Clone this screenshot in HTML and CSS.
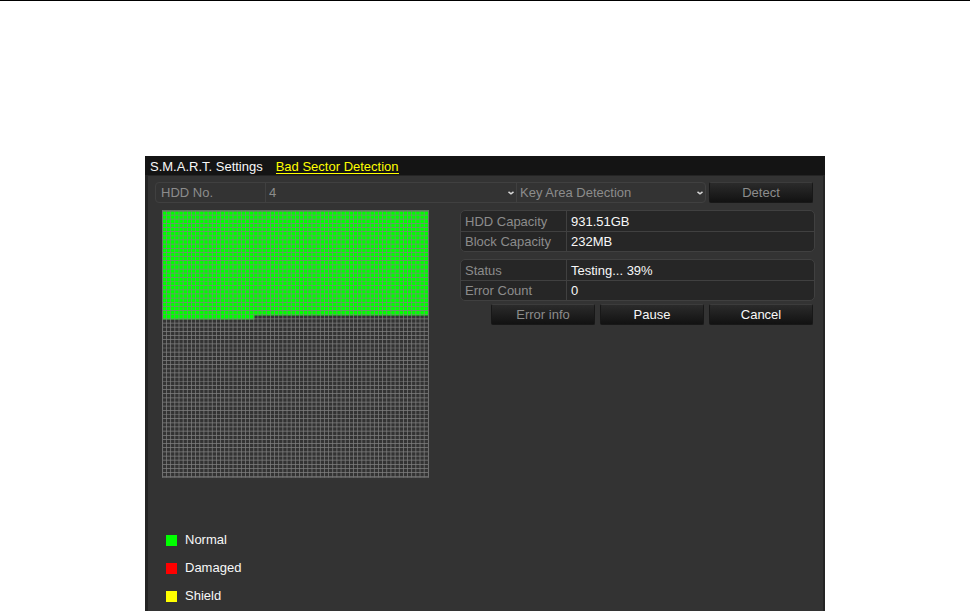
FILE: index.html
```
<!DOCTYPE html>
<html lang="en">
<head>
    <meta charset="UTF-8">
    <meta name="viewport" content="width=device-width, initial-scale=1.0">
    <title>Bad Sector Detection</title>
    <link rel="stylesheet" href="styles.css">
</head>
<body>
    <main class="panel">
        <nav class="tabs">
            <a class="tab" href="#smart">S.M.A.R.T. Settings</a>
            <a class="tab active" href="#bad-sector">Bad Sector Detection</a>
        </nav>

        <div class="content">
            <form class="toolbar">
                <div class="fields">
                    <label class="field-label" for="hdd">HDD No.</label>
                    <div class="field field-hdd">
                        <select id="hdd" disabled>
                            <option>4</option>
                        </select>
                        <svg class="arrow" viewBox="0 0 6 4"><path d="M0.5 0.8L3 2.8L5.5 0.8"/></svg>
                    </div>
                    <div class="field field-mode">
                        <select aria-label="Detection type" disabled>
                            <option>Key Area Detection</option>
                        </select>
                        <svg class="arrow" viewBox="0 0 6 4"><path d="M0.5 0.8L3 2.8L5.5 0.8"/></svg>
                    </div>
                </div>
                <button class="btn" type="button" disabled>Detect</button>
            </form>

            <div class="columns">
                <!-- 64 x 64 blocks, 4 units each -->
                <svg class="sectors" viewBox="0 0 257 257" role="img" aria-label="Sector map">
                    <path class="done" d="M0 0H257V101H89V105H0Z"/>
                    <path class="lines" d="M0 128.5H257"/>
                    <path class="lines" d="M128.5 0V257"/>
                    <path class="frame" d="M0.5 0.5H256.5V256.5H0.5Z"/>
                </svg>

                <div class="details">
                    <table class="info">
                        <tr><th scope="row">HDD Capacity</th><td>931.51GB</td></tr>
                        <tr><th scope="row">Block Capacity</th><td>232MB</td></tr>
                    </table>
                    <table class="info">
                        <tr><th scope="row">Status</th><td>Testing... 39%</td></tr>
                        <tr><th scope="row">Error Count</th><td>0</td></tr>
                    </table>
                    <div class="actions">
                        <button class="btn" type="button" disabled>Error info</button>
                        <button class="btn" type="button">Pause</button>
                        <button class="btn" type="button">Cancel</button>
                    </div>
                </div>
            </div>

            <ul class="legend">
                <li><span class="swatch normal"></span>Normal</li>
                <li><span class="swatch damaged"></span>Damaged</li>
                <li><span class="swatch shield"></span>Shield</li>
            </ul>
        </div>
    </main>
</body>
</html>
```
FILE: styles.css
```
:root {
    --panel: #333333;
    --edge: #242424;
    --line: #404040;
    --muted: #8c8c8c;
    --text: #f8f8f8;
}

* {
    box-sizing: border-box;
}

body {
    display: flex;
    flex-direction: column;
    min-height: 100vh;
    margin: 0;
    padding: 155px 16px 0;
    border-top: 1px solid #000;
    background: #fff;
    color: var(--text);
    font: 13px/20px "Liberation Sans", Arial, sans-serif;
}

.panel {
    flex: 1;
    width: 100%;
    max-width: 680px;
    margin: 0 auto;
    background: var(--panel);
    border: solid var(--edge);
    border-width: 0 2px 0 3px;
}

.tabs {
    display: flex;
    gap: 13px;
    height: 20px;
    margin: 0 -2px 0 -3px;
    padding: 2px 5px 0;
    background: #141414;
    border-bottom: 1px solid var(--edge);
}

.tab {
    height: 16px;
    line-height: 18px;
    color: var(--text);
    text-decoration: none;
}

.tab.active {
    color: #ffff00;
    border-bottom: 1px solid #ffff00;
}

.content {
    padding: 6px 8px 0 7px;
}

.toolbar {
    display: flex;
    align-items: center;
    gap: 3px;
    padding-right: 2px;
}

.fields {
    flex: 1;
    display: flex;
    height: 21px;
    border: 1px solid var(--line);
    border-radius: 4px;
    color: var(--muted);
}

.field-label {
    width: 109px;
    padding-left: 5px;
}

.field {
    display: flex;
    align-items: center;
    border-left: 1px solid var(--line);
    padding-right: 2px;
}

.field-hdd {
    flex: 4;
}

.field-mode {
    flex: 3;
}

.field select {
    flex: 1;
    appearance: none;
    padding: 0 3px;
    border: 0;
    background: none;
    color: var(--muted);
    font: inherit;
    opacity: 1;
}

.arrow {
    width: 6px;
    height: 4px;
    fill: none;
    stroke: #d8d8d8;
    stroke-width: 1.5;
}

.btn {
    width: 104px;
    height: 21px;
    padding: 0;
    border: 1px solid #181818;
    border-top-color: #3c3c3c;
    border-radius: 2px;
    background: linear-gradient(#2b2b2b, #121212);
    color: var(--text);
    font: inherit;
}

.btn:disabled {
    color: var(--muted);
}

.columns {
    display: flex;
    justify-content: space-between;
    align-items: flex-start;
    gap: 31px;
    padding: 7px 0 0 7px;
}

.sectors {
    width: 267px;
    height: 268px;
}

.done {
    fill: #00ff00;
}

/* one very thick stroke, dashed into the 65 grid lines */
.lines {
    fill: none;
    stroke: #808080;
    stroke-width: 257;
    stroke-dasharray: 0.7 3.3;
}

.frame {
    fill: none;
    stroke: #707070;
}

.details {
    flex: 1;
}

.info {
    width: 100%;
    margin: 0 0 7px;
    border: 1px solid var(--line);
    border-radius: 5px;
    border-spacing: 0;
    background: #262626;
}

.info th,
.info td {
    height: 20px;
    padding: 0 4px;
    line-height: 19px;
    text-align: left;
    font-weight: normal;
}

.info th {
    width: 106px;
    color: var(--muted);
    border-right: 1px solid var(--line);
}

.info tr + tr > * {
    border-top: 1px solid var(--line);
}

.actions {
    display: flex;
    justify-content: flex-end;
    gap: 5px;
    margin-top: -4px;
    padding-right: 2px;
}

.legend {
    display: grid;
    gap: 8px;
    margin: 52px 0 0;
    padding: 0 0 0 11px;
    list-style: none;
}

.legend li {
    display: flex;
    align-items: center;
    gap: 8px;
}

.swatch {
    width: 11px;
    height: 11px;
}

.normal {
    background: #00ff00;
}

.damaged {
    background: #ff0000;
}

.shield {
    background: #ffff00;
}
```
